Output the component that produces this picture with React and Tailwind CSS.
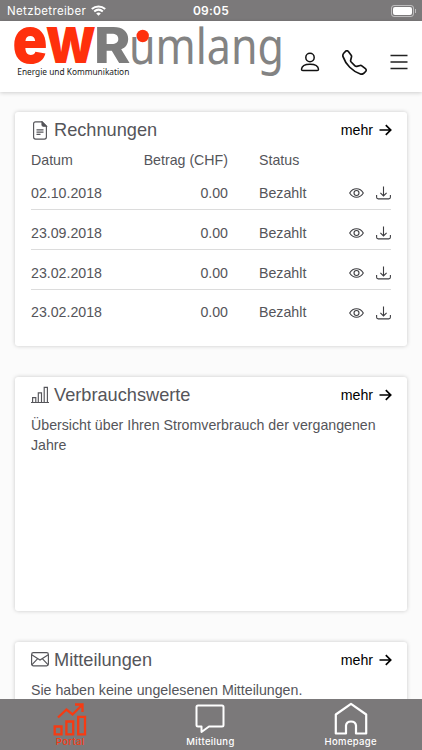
import React from 'react';

const sans = "font-['Liberation_Sans',Arial,sans-serif]";
const inter = "font-['Inter',sans-serif]";

function Wifi() {
  return (
    <svg width="15" height="11" viewBox="0 0 15 11" fill="none" stroke="white" strokeWidth="2">
      <path d="M.8 4C4.6.5 10.400.5 14.200 4M3.200 6.500C5.800 4.200 9.200 4.200 11.800 6.500" />
      <path d="M7.500 10.800 5.200 8.400C6.500 7.300 8.500 7.300 9.800 8.400Z" fill="white" stroke="none" />
    </svg>
  );
}

function Logo() {
  return (
    <svg className="block shrink-0" width="290" height="71" viewBox="0 21 290 71" fontFamily="'Inter', sans-serif">
      <text x="12.500" y="63.300" fontSize="66" fontWeight="900" fill="#ff300c" textLength="35" lengthAdjust="spacingAndGlyphs">e</text>
      <text x="45.500" y="63.300" fontSize="49" fontWeight="900" fill="#ff300c" textLength="50.500" lengthAdjust="spacingAndGlyphs">W</text>
      <text x="94" y="63.300" fontSize="49" fontWeight="800" fill="#7d7d7d" textLength="36.500" lengthAdjust="spacingAndGlyphs">R</text>
      <text x="129" y="63.500" fontSize="50" fontWeight="400" fill="#838383" textLength="155" lengthAdjust="spacingAndGlyphs" fontFamily="'Noto Sans', sans-serif">umlang</text>
      <circle cx="142.700" cy="36" r="6.200" fill="#ff300c" />
      <text x="17.300" y="75" fontSize="9.500" fill="#222" fontFamily="'Noto Sans', sans-serif" textLength="112" lengthAdjust="spacingAndGlyphs">Energie und Kommunikation</text>
    </svg>
  );
}

function Person() {
  return (
    <svg width="20" height="20" viewBox="0 0 20 20" fill="none" stroke="#111" strokeWidth="1.500">
      <circle cx="10" cy="5.500" r="4.200" />
      <path d="M1.500 17.200C1.800 13.600 5 12.200 10 12.200S18.200 13.600 18.500 17.200Q18.500 18.500 17.200 18.500H2.800Q1.500 18.500 1.500 17.200Z" strokeLinejoin="round" />
    </svg>
  );
}

function Phone() {
  return (
    <svg width="25" height="25" viewBox="0 0 16 16" fill="#111">
      <path d="M3.654 1.328a.678.678 0 0 0-1.015-.063L1.605 2.300c-.483.484-.661 1.169-.45 1.770a17.600 17.600 0 0 0 4.168 6.608 17.600 17.600 0 0 0 6.608 4.168c.601.211 1.286.033 1.770-.450l1.034-1.034a.678.678 0 0 0-.063-1.015l-2.307-1.794a.68.68 0 0 0-.580-.122l-2.190.547a1.750 1.750 0 0 1-1.657-.459L5.482 8.062a1.750 1.750 0 0 1-.460-1.657l.548-2.190a.68.68 0 0 0-.122-.580zM1.884.511a1.745 1.745 0 0 1 2.612.163L6.290 2.980c.329.423.445.974.315 1.494l-.547 2.190a.68.68 0 0 0 .178.643l2.457 2.457a.68.68 0 0 0 .644.178l2.189-.547a1.750 1.750 0 0 1 1.494.315l2.306 1.794c.829.645.905 1.870.163 2.611l-1.034 1.034c-.740.740-1.846 1.065-2.877.702a18.600 18.600 0 0 1-7.010-4.420 18.600 18.600 0 0 1-4.420-7.009c-.362-1.030-.037-2.137.703-2.877z" />
    </svg>
  );
}

function Menu() {
  return (
    <svg width="18" height="16" viewBox="0 0 18 16" stroke="#222" strokeWidth="1.500">
      <path d="M.5 1.500H17.500M.5 8H17.500M.5 14.500H17.500" />
    </svg>
  );
}

function FileIcon() {
  return (
    <svg width="18" height="20" viewBox="0 0 18 20" fill="none" stroke="#55555a" strokeWidth="1.150">
      <path d="M11 .8H4.600Q2.600.8 2.600 2.800V16.100Q2.600 18.100 4.600 18.100H13.400Q15.400 18.100 15.400 16.100V5.200Z" />
      <path d="M11 .8V3.800Q11 5.200 12.400 5.200H15.400Z" fill="#55555a" />
      <path d="M5.500 8.900H12.500M5.500 11.100H12.500M5.500 13.300H9.500" />
    </svg>
  );
}

function BarsIcon() {
  return (
    <svg width="18" height="20" viewBox="0 0 18 20" fill="none" stroke="#55555a" strokeWidth="1.150">
      <path d="M0 16.500H18M1.600 16.500V11.600H4.800V16.500M7.300 16.500V6.900H10.500V16.500M13.200 16.500V1.400H16.400V16.500" />
    </svg>
  );
}

function MailIcon() {
  return (
    <svg width="18" height="20" viewBox="0 0 18 20" fill="none" stroke="#55555a" strokeWidth="1.150">
      <rect x=".6" y="1.600" width="16.800" height="13.200" rx="1.800" />
      <path d="M.7 3.700 9 9 17.300 3.700M.8 13.800 6.700 7.700M17.200 13.800 11.300 7.700" />
    </svg>
  );
}

function Eye() {
  return (
    <svg width="15" height="12" viewBox="0 0 15 12" fill="none" stroke="#3e3e42" strokeWidth="1.100">
      <path d="M.7 6C4 .4 11 .4 14.300 6C11 11.600 4 11.600.7 6Z" />
      <circle cx="7.500" cy="6" r="2.500" />
    </svg>
  );
}

function Download() {
  return (
    <svg width="15" height="14" viewBox="0 0 15 14" fill="none" stroke="#3e3e42" strokeWidth="1.100">
      <path d="M.6 9V11.300Q.6 12.900 2.200 12.900H12.800Q14.400 12.900 14.400 11.300V9M7.500.5V9.800M4.400 6.800 7.500 9.900 10.600 6.800" />
    </svg>
  );
}

function Arrow() {
  return (
    <svg className="mb-px" width="13" height="12" viewBox="0 0 13 12" fill="none" stroke="black" strokeWidth="1.700">
      <path d="M.5 6H11.500M6.800 1.200 11.700 6 6.800 10.800" />
    </svg>
  );
}

function Card({ icon, title, className, children }) {
  return (
    <section className={`mx-[15px] shrink-0 rounded-[3px] bg-white px-4 shadow-[0_0_4px_rgba(0,0,0,0.2)] ${className}`}>
      <div className="flex h-[38px] items-center">
        {icon}
        <h2 className="ml-[5px] flex-1 text-[18.200px] text-[#55555a]">{title}</h2>
        <a className="mr-[-1px] flex items-center gap-1.5 text-[14.200px] text-black">mehr <Arrow /></a>
      </div>
      {children}
    </section>
  );
}

const bills = ['02.10.2018', '23.09.2018', '23.02.2018', '23.02.2018'];
const columns = 'grid grid-cols-[98px_99px_31px_80px_1fr] items-center';

function Tab({ label, className = '', children }) {
  return (
    <div className={`flex flex-1 flex-col items-center ${className}`}>
      <div className="flex h-[37px] items-end">{children}</div>
      <span className="text-[9.500px] font-medium leading-[12px] tracking-[0.35px]">{label}</span>
    </div>
  );
}

export default function App() {
  return (
    <div className={`flex h-[750px] w-[422px] flex-col overflow-hidden bg-[#fbfbfb] ${sans}`}>
      <div className={`grid h-[21px] shrink-0 grid-cols-3 items-center bg-[#7b797a] text-white ${inter}`}>
        <div className="flex items-center gap-[5px] pl-[7px] text-[11.500px] leading-4 tracking-[0.350px]">Netzbetreiber <Wifi /></div>
        <div className="text-center text-[12px] font-semibold leading-4 tracking-[0.250px]">09:05</div>
        <div className="flex items-center justify-end pr-[6px]">
          <div className="h-[12px] w-[23px] rounded-[3px] border border-white/50 p-px"><div className="h-full rounded-[2px] bg-white" /></div>
          <div className="ml-px h-1 w-px bg-white/50" />
        </div>
      </div>
      <header className="flex h-[71px] shrink-0 bg-white shadow-[0_1px_4px_rgba(0,0,0,0.18)]">
        <Logo />
        <div className="flex flex-1 items-center pl-[10px] pt-[11px]">
          <Person />
          <div className="ml-[22px] pt-px"><Phone /></div>
          <div className="ml-[23px]"><Menu /></div>
        </div>
      </header>
      <main className="flex min-h-0 flex-1 flex-col gap-[31px] overflow-hidden pt-[20px] text-[14.200px] text-[#55555a]">
        <Card title="Rechnungen" icon={<FileIcon />} className="h-[234px]">
          <div className={`${columns} h-[20px]`}>
            <span>Datum</span><span className="text-right">Betrag (CHF)</span><span /><span>Status</span>
          </div>
          {bills.map((date, i) => (
            <div key={i} className={`${columns} ${i === 0 ? 'mt-[8px] h-[32px]' : i === 3 ? 'h-[38px] pt-[8px]' : 'h-[40px] pt-[8px]'} ${i < 3 ? 'border-b border-[#dcdcdc]' : ''}`}>
              <span>{date}</span><span className="text-right">0.00</span><span /><span>Bezahlt</span>
              <span className="flex items-center justify-end gap-[12px] whitespace-nowrap pb-px"><Eye /><Download /></span>
            </div>
          ))}
        </Card>
        <Card title="Verbrauchswerte" icon={<BarsIcon />} className="h-[234px]">
          <p className="leading-5">Übersicht über Ihren Stromverbrauch der vergangenen Jahre</p>
        </Card>
        <Card title="Mitteilungen" icon={<MailIcon />} className="h-[120px]">
          <p className="leading-5">Sie haben keine ungelesenen Mitteilungen.</p>
        </Card>
      </main>
      <nav className={`flex h-[51px] shrink-0 bg-[#7b797a] pr-px text-white ${inter}`}>
        <Tab label="Portal" className="text-[#f63b13]">
          <svg width="34" height="34" viewBox="0 0 34 34" fill="none" stroke="currentColor" strokeWidth="2.300">
            <path d="M1.700 24.500H8.500V32.300H1.700ZM13.400 19.500H20.200V32.300H13.400ZM25.200 14.800H32V32.300H25.200Z" />
            <path d="M5 15.500 13.500 7.500 19.500 12.500 28.500 3.500M22 2.500H29.500V10" />
          </svg>
        </Tab>
        <Tab label="Mitteilung">
          <svg width="30" height="34" viewBox="0 0 30 34" fill="none" stroke="currentColor" strokeWidth="2" strokeLinejoin="round">
            <path d="M3 3.500H27Q28.500 3.500 28.500 5V23Q28.500 24.500 27 24.500H14L6.500 30V24.500H3Q1.500 24.500 1.500 23V5Q1.500 3.500 3 3.500Z" />
          </svg>
        </Tab>
        <Tab label="Homepage">
          <svg width="34" height="34" viewBox="0 0 34 34" fill="none" stroke="currentColor" strokeWidth="2.200" strokeLinejoin="round">
            <path d="M1.800 12.500 17 1.800 32.200 12.500V31.500H22V23.500Q21.500 19.500 17 19.500T12 23.500V31.500H1.800Z" />
          </svg>
        </Tab>
      </nav>
    </div>
  );
}
